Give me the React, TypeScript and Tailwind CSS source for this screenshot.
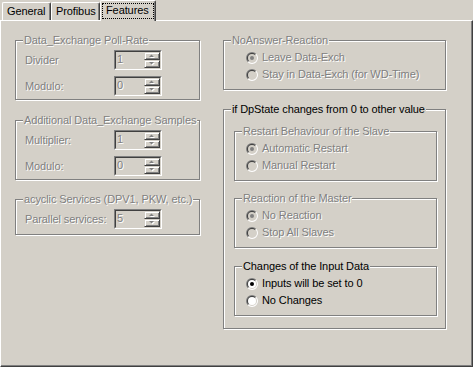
import React from "react";

const DIS = "text-[#808080] [text-shadow:1px_1px_0_#fff]";

function Group({
  title,
  disabled,
  className = "",
  children,
}: {
  title: string;
  disabled?: boolean;
  className?: string;
  children?: React.ReactNode;
}) {
  return (
    <fieldset
      className={`border border-[#808080] shadow-[1px_1px_0_#fff,inset_1px_1px_0_#fff] ${className}`}
    >
      <legend
        className={`ml-[7px] px-[1px] bg-[#d4d0c8] leading-[13px] ${disabled ? DIS : "text-black"}`}
      >
        {title}
      </legend>
      {children}
    </fieldset>
  );
}

function Arrow({ up }: { up?: boolean }) {
  const p = up ? "M0 3 L2.5 0.5 L5 3 Z" : "M0 0 L2.5 2.5 L5 0 Z";
  return (
    <svg width="6" height="4" viewBox="0 0 6 4" className="overflow-visible">
      <path d={p} fill="#fff" transform="translate(1 1)" />
      <path d={p} fill="#808080" />
    </svg>
  );
}

function SpinBtn({ up }: { up?: boolean }) {
  return (
    <div className="w-[16px] h-[8px] border border-t-[#d4d0c8] border-l-[#d4d0c8] border-r-[#404040] border-b-[#404040] shadow-[inset_1px_1px_0_#fff,inset_-1px_-1px_0_#808080] flex items-center justify-center">
      <Arrow up={up} />
    </div>
  );
}

function Spin({ value }: { value: string }) {
  return (
    <div className="w-[48px] h-[20px] border border-t-[#808080] border-l-[#808080] border-r-white border-b-white">
      <div className="h-full border border-t-[#404040] border-l-[#404040] border-r-[#d4d0c8] border-b-[#d4d0c8] flex">
        <div className={`flex-1 pl-[1px] pt-[1px] leading-[12px] ${DIS}`}>{value}</div>
        <div className="flex flex-col">
          <SpinBtn up />
          <SpinBtn />
        </div>
      </div>
    </div>
  );
}

function Radio({ checked, disabled }: { checked?: boolean; disabled?: boolean }) {
  return (
    <svg width="12" height="12" viewBox="0 0 12 12" className="shrink-0">
      <path d="M1.757 10.243 A6 6 0 0 1 10.243 1.757 Z" fill="#808080" />
      <path d="M10.243 1.757 A6 6 0 0 1 1.757 10.243 Z" fill="#ffffff" />
      <path d="M2.464 9.536 A5 5 0 0 1 9.536 2.464 Z" fill="#404040" />
      <path d="M9.536 2.464 A5 5 0 0 1 2.464 9.536 Z" fill="#d4d0c8" />
      <circle cx="6" cy="6" r="4" fill={disabled ? "#d4d0c8" : "#ffffff"} />
      {checked && <circle cx="6" cy="6" r="2" fill={disabled ? "#808080" : "#000000"} />}
    </svg>
  );
}

function RadioRow({
  label,
  checked,
  disabled,
}: {
  label: string;
  checked?: boolean;
  disabled?: boolean;
}) {
  return (
    <div className="h-[17px] flex items-center gap-[4px]">
      <Radio checked={checked} disabled={disabled} />
      <span className={`leading-[13px] whitespace-nowrap ${disabled ? DIS : "text-black"}`}>{label}</span>
    </div>
  );
}

function SpinRow({ label, value, gapTop = false }: { label: string; value: string; gapTop?: boolean }) {
  return (
    <div className={`flex h-[20px] ${gapTop ? "mt-[6px]" : ""}`}>
      <span className={`w-[89px] pt-[4px] leading-[13px] whitespace-nowrap ${DIS}`}>{label}</span>
      <Spin value={value} />
    </div>
  );
}

export default function App() {
  return (
    <div className="w-[473px] h-[367px] bg-[#d4d0c8] flex flex-col overflow-hidden font-['Liberation_Sans',Arial,sans-serif] text-[11px] tracking-[-0.1px] text-black">
      {/* Tabs */}
      <div className="h-[20px] flex items-end pl-[2px] relative z-10">
        <div className="h-[18px] w-[49px] border-l border-t border-r border-l-white border-t-white border-r-[#404040] shadow-[inset_-1px_0_0_#808080] rounded-tl-[2px] rounded-tr-[2px] pl-[4px] pt-[2px] leading-[13px]">
          General
        </div>
        <div className="h-[18px] w-[49px] border-l border-t border-r border-l-white border-t-white border-r-[#404040] shadow-[inset_-1px_0_0_#808080] rounded-tl-[2px] rounded-tr-[2px] pl-[4px] pt-[2px] leading-[13px]">
          Profibus
        </div>
        <div className="h-[21px] w-[56px] -mb-[1px] bg-[#d4d0c8] border-l border-t border-r border-l-white border-t-white border-r-[#404040] shadow-[inset_-1px_0_0_#808080] rounded-tl-[2px] rounded-tr-[2px] pl-[1px] pt-[2px]">
          <div className="w-[52px] h-[16px] border border-dotted border-black pl-[3px] leading-[13px]">
            Features
          </div>
        </div>
      </div>

      {/* Panel */}
      <div className="flex-1 flex border-t border-l border-r border-b border-t-white border-l-white border-r-[#404040] border-b-[#404040] shadow-[inset_-1px_-1px_0_#808080] pl-[14px] pt-[13px]">
        {/* Left column */}
        <div className="w-[185px] flex flex-col">
          <Group title="Data_Exchange Poll-Rate" disabled className="h-[66px]">
            <div className="pl-[9px] pt-[3px] flex flex-col">
              <SpinRow label="Divider" value="1" />
              <SpinRow label="Modulo:" value="0" gapTop />
            </div>
          </Group>
          <Group title="Additional Data_Exchange Samples" disabled className="h-[66px] mt-[14px]">
            <div className="pl-[9px] pt-[3px] flex flex-col">
              <SpinRow label="Multiplier:" value="1" />
              <SpinRow label="Modulo:" value="0" gapTop />
            </div>
          </Group>
          <Group title="acyclic Services (DPV1, PKW, etc.)" disabled className="h-[42px] mt-[13px]">
            <div className="pl-[9px] pt-[3px] flex flex-col">
              <SpinRow label="Parallel services:" value="5" />
            </div>
          </Group>
        </div>

        {/* Right column */}
        <div className="w-[223px] ml-[23px] flex flex-col">
          <Group title="NoAnswer-Reaction" disabled className="h-[56px]">
            <div className="pl-[22px] pt-[2px] flex flex-col">
              <RadioRow label="Leave Data-Exch" checked disabled />
              <RadioRow label="Stay in Data-Exch (for WD-Time)" disabled />
            </div>
          </Group>
          <Group title="if DpState changes from 0 to other value" className="h-[226px] mt-[13px]">
            <div className="pl-[10px] pt-[9px] flex flex-col">
              <Group title="Restart Behaviour of the Slave" disabled className="w-[203px] h-[56px]">
                <div className="pl-[11px] pt-[2px] flex flex-col">
                  <RadioRow label="Automatic Restart" checked disabled />
                  <RadioRow label="Manual Restart" disabled />
                </div>
              </Group>
              <Group title="Reaction of the Master" disabled className="w-[203px] h-[56px] mt-[11px]">
                <div className="pl-[11px] pt-[2px] flex flex-col">
                  <RadioRow label="No Reaction" checked disabled />
                  <RadioRow label="Stop All Slaves" disabled />
                </div>
              </Group>
              <Group title="Changes of the Input Data" className="w-[203px] h-[56px] mt-[12px]">
                <div className="pl-[11px] pt-[2px] flex flex-col">
                  <RadioRow label="Inputs will be set to 0" checked />
                  <RadioRow label="No Changes" />
                </div>
              </Group>
            </div>
          </Group>
        </div>
      </div>
    </div>
  );
}
